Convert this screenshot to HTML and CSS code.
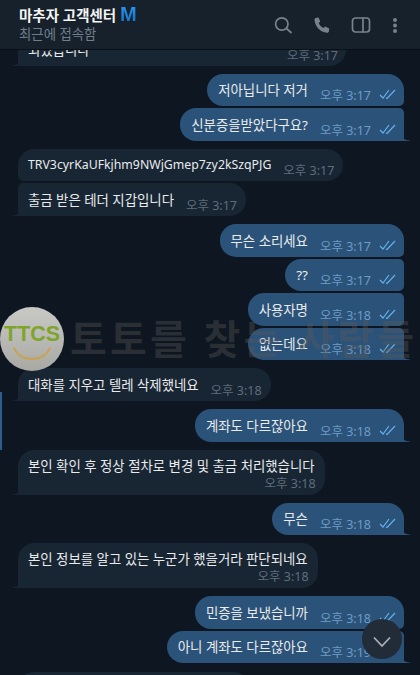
FILE: index.html
```html
<!DOCTYPE html>
<html lang="ko">
<head>
    <meta charset="UTF-8">
    <title>마추자 고객센터</title>
    <link rel="stylesheet" href="styles.css">
</head>
<body>
    <div class="app">
        <header class="topbar">
            <div class="peer">
                <div class="peer-name">마추자 고객센터 <span class="peer-mark">M</span></div>
                <div class="peer-status">최근에 접속함</div>
            </div>
            <div class="topbar-icons">
                <svg class="icon" viewBox="0 0 24 24"><circle cx="10.800" cy="11" r="6.200"/><path d="M15.500 15.500L20 19.500"/></svg>
                <svg class="icon" viewBox="0 0 24 24"><path class="solid" d="M5.800 5l2.700-.5 1.800 4-1.600 1.400c.8 2.100 2.500 3.900 4.700 5.100l1.800-1.400 4 1.900-.3 2.700c-.2 1-1 1.600-2 1.500C10.500 19.500 4.600 13 4.500 6.500c0-.7.500-1.300 1.300-1.500z"/></svg>
                <svg class="icon" viewBox="0 0 24 24"><rect x="3.500" y="5" width="17" height="14" rx="3"/><path d="M14 5v14"/></svg>
                <svg class="icon icon-more" viewBox="0 0 24 24"><circle class="solid" cx="12" cy="7" r="2"/><circle class="solid" cx="12" cy="12.500" r="2"/><circle class="solid" cx="12" cy="18" r="2"/></svg>
            </div>
        </header>

        <main class="chat">
            <div class="msg in tail clipped"><span class="msg-text">되었습니다</span><span class="msg-time">오후 3:17</span></div>

            <div class="msg out first group-start">
                <span class="msg-text">저아닙니다 저거</span><span class="msg-time">오후 3:17</span>
                <svg class="check" viewBox="0 0 18 12"><path d="M1 7l3 3 6-8M7 10l1 .5L16 2"/></svg>
            </div>
            <div class="msg out tail">
                <span class="msg-text">신분증을받았다구요?</span><span class="msg-time">오후 3:17</span>
                <svg class="check" viewBox="0 0 18 12"><path d="M1 7l3 3 6-8M7 10l1 .5L16 2"/></svg>
            </div>

            <div class="msg in group-start first"><span class="msg-text latin">TRV3cyrKaUFkjhm9NWjGmep7zy2kSzqPJG</span><span class="msg-time">오후 3:17</span></div>
            <div class="msg in tail"><span class="msg-text">출금 받은 테더 지갑입니다</span><span class="msg-time">오후 3:17</span></div>

            <div class="msg out first group-start">
                <span class="msg-text">무슨 소리세요</span><span class="msg-time">오후 3:17</span>
                <svg class="check" viewBox="0 0 18 12"><path d="M1 7l3 3 6-8M7 10l1 .5L16 2"/></svg>
            </div>
            <div class="msg out">
                <span class="msg-text">??</span><span class="msg-time">오후 3:17</span>
                <svg class="check" viewBox="0 0 18 12"><path d="M1 7l3 3 6-8M7 10l1 .5L16 2"/></svg>
            </div>
            <div class="msg out">
                <span class="msg-text">사용자명</span><span class="msg-time">오후 3:18</span>
                <svg class="check" viewBox="0 0 18 12"><path d="M1 7l3 3 6-8M7 10l1 .5L16 2"/></svg>
            </div>
            <div class="msg out tail">
                <span class="msg-text">없는데요</span><span class="msg-time">오후 3:18</span>
                <svg class="check" viewBox="0 0 18 12"><path d="M1 7l3 3 6-8M7 10l1 .5L16 2"/></svg>
            </div>

            <div class="msg in tail group-start first"><span class="msg-text">대화를 지우고 텔레 삭제했네요</span><span class="msg-time">오후 3:18</span></div>

            <div class="msg out tail first group-start">
                <span class="msg-text">계좌도 다르잖아요</span><span class="msg-time">오후 3:18</span>
                <svg class="check" viewBox="0 0 18 12"><path d="M1 7l3 3 6-8M7 10l1 .5L16 2"/></svg>
            </div>

            <div class="msg in tail first group-start wrap"><span class="msg-text">본인 확인 후 정상 절차로 변경 및 출금 처리했습니다</span><span class="msg-time">오후 3:18</span></div>

            <div class="msg out tail first group-start">
                <span class="msg-text">무슨</span><span class="msg-time">오후 3:18</span>
                <svg class="check" viewBox="0 0 18 12"><path d="M1 7l3 3 6-8M7 10l1 .5L16 2"/></svg>
            </div>

            <div class="msg in tail first group-start wrap"><span class="msg-text">본인 정보를 알고 있는 누군가 했을거라 판단되네요</span><span class="msg-time">오후 3:18</span></div>

            <div class="msg out first group-start">
                <span class="msg-text">민증을 보냈습니까</span><span class="msg-time">오후 3:18</span>
                <svg class="check" viewBox="0 0 18 12"><path d="M1 7l3 3 6-8M7 10l1 .5L16 2"/></svg>
            </div>
            <div class="msg out tail">
                <span class="msg-text">아니 계좌도 다르잖아요</span><span class="msg-time">오후 3:19</span>
                <svg class="check" viewBox="0 0 18 12"><path d="M1 7l3 3 6-8M7 10l1 .5L16 2"/></svg>
            </div>
            <div class="msg in first group-start next-peek"></div>
        </main>

        <!-- watermark sits over the chat -->
        <div class="watermark">
            <div class="wm-logo">
                <span class="wm-logo-text">TTCS</span>
                <svg class="wm-smile" viewBox="0 0 44 16"><path d="M2 2c4 9 11 12.500 20 12.500S38 11 42 2"/></svg>
            </div>
            <span class="wm-text">토토를 찾는 사람들</span>
        </div>

        <div class="side-marker"></div>

        <button class="scroll-down">
            <svg viewBox="0 0 24 24"><path d="M4 9.500l8 8.500 8-8.500"/></svg>
        </button>
    </div>
</body>
</html>
```

FILE: styles.css
```css
html, body {
    margin: 0;
    padding: 0;
}

/* Whole window */
.app {
    position: relative;
    display: flex;
    flex-direction: column;
    width: 420px;
    height: 675px;
    overflow: hidden;
    background-color: #0e1621;
    font-family: "Noto Sans", "Noto Sans CJK KR", sans-serif;
    color: #e9ebed;
}

/* Top bar */
.topbar {
    display: flex;
    flex: none;
    align-items: center;
    justify-content: space-between;
    box-sizing: border-box;
    height: 50px;
    padding: 0 13px 0 19px;
    background-color: #17212b;
    border-bottom: 1px solid #0b1119;
}

.peer-name {
    font-size: 14.500px;
    font-weight: 700;
    line-height: 18px;
    color: #f5f5f5;
}

.peer-mark {
    font-family: "Liberation Sans", sans-serif;
    font-size: 20px;
    line-height: 14px;
    background: linear-gradient(#2a9bf5, #0f6fc9);
    -webkit-background-clip: text;
    background-clip: text;
    color: transparent;
}

.peer-status {
    margin-top: 1px;
    font-size: 13.400px;
    line-height: 18px;
    color: #6d7f8f;
}

.topbar-icons {
    display: flex;
    align-items: center;
    gap: 15px;
}

.icon {
    width: 24px;
    height: 24px;
    fill: none;
    stroke: #77828c;
    stroke-width: 1.700;
    stroke-linecap: round;
}

.icon .solid {
    fill: #77828c;
    stroke: none;
}

.icon-more {
    margin-left: -5px;
}

/* Message list */
.chat {
    display: flex;
    flex: 1;
    flex-direction: column;
    align-items: flex-start;
    gap: 2px;
    min-height: 0;
    overflow: hidden;
    padding: 0 16px 0 18px;
}

.msg {
    position: relative;
    flex: none;
    display: flex;
    align-items: flex-end;
    box-sizing: border-box;
    height: 32.600px;
    padding: 0 7px 0 11px;
    font-size: 13.400px;
    line-height: 18px;
}

.group-start {
    margin-top: 6px;
}

.msg-text {
    padding: 6px 0 7px;
    white-space: nowrap;
}

.latin {
    font-size: 12.300px;
}

.msg-time {
    margin-left: 12px;
    padding-bottom: 1px;
    font-size: 12.500px;
    white-space: nowrap;
}

.in {
    padding: 0 9px 0 10px;
    background-color: #182533;
    border-radius: 5px 16px 16px 5px;
}

.in.first {
    border-top-left-radius: 16px;
}

.in .msg-time {
    color: #5f6d7a;
}

.out {
    align-self: flex-end;
    background-color: #2b5278;
    border-radius: 16px 5px 5px 16px;
}

.out.first {
    border-top-right-radius: 16px;
}

.out .msg-time {
    color: #6d9cc6;
}

.check {
    flex: none;
    width: 18px;
    height: 12px;
    margin: 0 0 6px 8px;
    fill: none;
    stroke: #64b0ea;
    stroke-width: 1.200;
}

/* Little tail at the bottom corner of a group */
.tail::after {
    content: "";
    position: absolute;
    bottom: 0;
    width: 6px;
    height: 12px;
}

.out.tail {
    border-bottom-right-radius: 0;
}

.out.tail::after {
    right: -6px;
    background: radial-gradient(circle at 100% 0, transparent 11px, #2b5278 12px);
}

.in.tail {
    border-bottom-left-radius: 0;
}

.in.tail::after {
    left: -6px;
    background: radial-gradient(circle at 0 0, transparent 11px, #182533 12px);
}

/* Two line bubbles: time goes under the text */
.wrap {
    flex-direction: column;
    height: 45px;
    padding-right: 10px;
}

.wrap .msg-text {
    padding: 7px 0 0;
}

.wrap .msg-time {
    align-self: flex-end;
    margin: 0 -1px 0 0;
    padding-bottom: 2px;
}

/* First bubble is cut off by the top bar */
.clipped {
    justify-content: space-between;
    width: 328px;
    margin-top: -17px;
    padding-right: 8px;
}

.next-peek {
    width: 232px;
    margin-top: 7px;
}

/* Watermark */
.watermark {
    position: absolute;
    top: 307px;
    left: 0;
    display: flex;
    align-items: center;
    gap: 6px;
    width: 420px;
    pointer-events: none;
}

.wm-logo {
    flex: none;
    display: flex;
    flex-direction: column;
    align-items: center;
    box-sizing: border-box;
    width: 64px;
    height: 64px;
    padding-top: 17px;
    border-radius: 50%;
    background: linear-gradient(#c8c8c4, #a9a9a4);
}

.wm-logo-text {
    font-family: "Liberation Sans", sans-serif;
    font-size: 21.400px;
    font-weight: 700;
    line-height: 21px;
    color: #7ea52a;
}

.wm-smile {
    width: 40px;
    height: 16px;
    fill: none;
    stroke: #c9a34f;
    stroke-width: 2;
}

.wm-text {
    font-size: 40px;
    font-weight: 700;
    line-height: 44px;
    letter-spacing: 3.200px;
    white-space: nowrap;
    color: rgba(90, 90, 90, 0.38);
}

.side-marker {
    position: absolute;
    top: 392px;
    left: 0;
    width: 2px;
    height: 58px;
    background-color: #2b5d8e;
}

/* Scroll to bottom button */
.scroll-down {
    position: absolute;
    top: 619px;
    left: 362px;
    width: 40px;
    height: 40px;
    padding: 9px 8px;
    border: none;
    border-radius: 50%;
    background-color: #212c38;
}

.scroll-down svg {
    display: block;
    width: 24px;
    height: 24px;
    fill: none;
    stroke: #a8afb6;
    stroke-width: 1.800;
}
```
